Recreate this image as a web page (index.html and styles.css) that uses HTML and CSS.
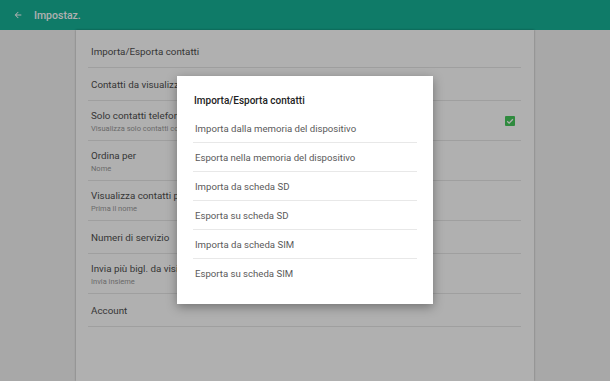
FILE: index.html
```html
<!DOCTYPE html>
<html lang="it">
<head>
  <meta charset="UTF-8" />
  <title>Impostaz.</title>
  <link rel="stylesheet" href="styles.css">
</head>
<body>
  <header class="toolbar">
    <svg class="back" viewBox="0 0 24 24" width="10" height="10"><path d="M20 11H7.83l5.59-5.59L12 4l-8 8 8 8 1.41-1.41L7.83 13H20v-2z" fill="currentColor"/></svg>
    <span class="toolbar-title">Impostaz.</span>
  </header>

  <main class="settings">
    <div class="settings-list">
      <div class="row">Importa/Esporta contatti</div>
      <div class="row">Contatti da visualizzare</div>
      <div class="row double">
        <div class="row-text">
          <div>Solo contatti telefono con numero</div>
          <div class="sub">Visualizza solo contatti con numero di telefono</div>
        </div>
        <span class="check">
          <svg viewBox="0 0 10 10" width="10" height="10"><path d="M2.2 5.2l1.9 1.9 3.8-3.9" fill="none" stroke="#fff" stroke-width="1.3"/></svg>
        </span>
      </div>
      <div class="row double">
        <div class="row-text">
          <div>Ordina per</div>
          <div class="sub">Nome</div>
        </div>
      </div>
      <div class="row double">
        <div class="row-text">
          <div>Visualizza contatti per nome</div>
          <div class="sub">Prima il nome</div>
        </div>
      </div>
      <div class="row">Numeri di servizio</div>
      <div class="row double">
        <div class="row-text">
          <div>Invia più bigl. da visita</div>
          <div class="sub">Invia insieme</div>
        </div>
      </div>
      <div class="row">Account</div>
    </div>
  </main>

  <div class="scrim"></div>

  <div class="dialog">
    <div class="dialog-title">Importa/Esporta contatti</div>
    <div class="dialog-item">Importa dalla memoria del dispositivo</div>
    <div class="dialog-item">Esporta nella memoria del dispositivo</div>
    <div class="dialog-item">Importa da scheda SD</div>
    <div class="dialog-item">Esporta su scheda SD</div>
    <div class="dialog-item">Importa da scheda SIM</div>
    <div class="dialog-item">Esporta su scheda SIM</div>
  </div>
</body>
</html>
```

FILE: styles.css
```css
html, body {
  height: 100%;
}
body {
  margin: 0;
  font-family: Roboto, 'Noto Sans', sans-serif;
  background-color: #f4f4f4;
  color: #505050;
  overflow: hidden;
  display: flex;
  flex-direction: column;
}
.toolbar {
  height: 30px;
  flex: none;
  background-color: #16b297;
  color: #fff;
  display: flex;
  align-items: center;
  padding-left: 13px;
}
.back {
  margin-right: 11px;
}
.toolbar-title {
  font-size: 10.5px;
  font-weight: 500;
}
.settings {
  flex: 1;
  width: 458px;
  margin-left: 76px;
  background: #fff;
  box-shadow: 0 0 2px rgba(0,0,0,0.35);
}
.settings-list {
  padding: 5px 13px 0 12px;
}
.row {
  height: 32px;
  border-bottom: 1px solid #e6e6e6;
  display: flex;
  align-items: center;
  padding: 0 3px;
  font-size: 9.8px;
  white-space: nowrap;
  overflow: hidden;
}
.row.double {
  height: 39px;
  justify-content: space-between;
}
.row-text {
  line-height: 14px;
  margin-top: 1px;
}
.sub {
  font-size: 7.5px;
  line-height: 11px;
  color: #9a9a9a;
}
.check {
  width: 10px;
  height: 10px;
  background: #44c85b;
  border-radius: 1px;
  margin-right: 3px;
  display: flex;
}
.scrim {
  position: absolute;
  inset: 0;
  background: rgba(0,0,0,0.31);
}
.dialog {
  position: absolute;
  left: 177px;
  top: 76px;
  width: 224px;
  padding: 18px 16px 17px;
  background: #fff;
  box-shadow: 0 3px 10px rgba(0,0,0,0.35);
  font-size: 9.6px;
  color: #5a5a5a;
}
.dialog-title {
  line-height: 14px;
  font-size: 10px;
  font-weight: 500;
  color: #222;
  margin-bottom: 6px;
  padding-left: 1px;
}
.dialog-item {
  height: 28px;
  display: flex;
  align-items: center;
  padding-left: 2px;
  border-bottom: 1px solid #e8e8e8;
}
.dialog-item:last-child {
  border-bottom: none;
}
```
